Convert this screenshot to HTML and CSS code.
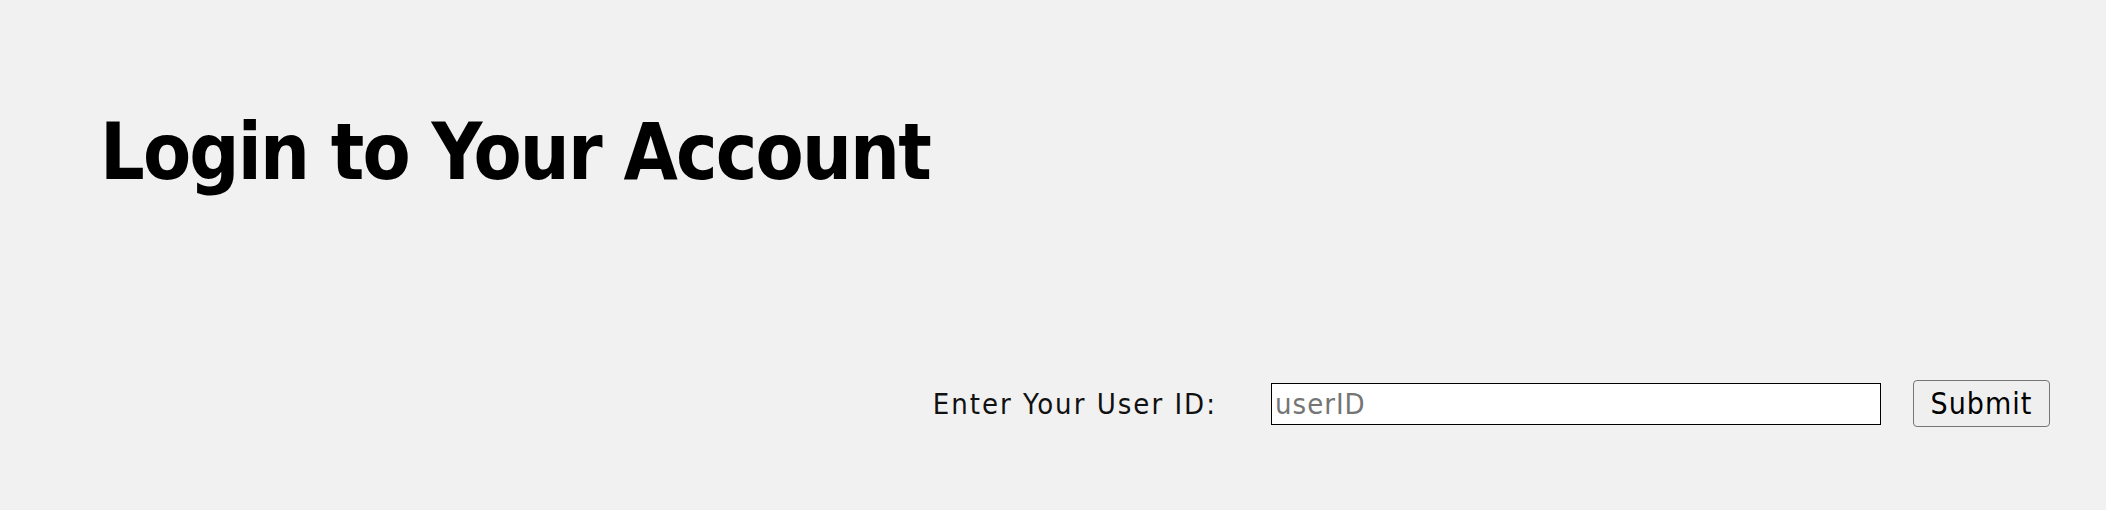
FILE: index.html
```html
<!DOCTYPE html>
<html>
<head>
<meta charset="utf-8">
<link rel="stylesheet" href="styles.css">
</head>
<body>
<div class="page">
  <h1 class="title">Login to Your Account</h1>
  <form class="login-form">
    <label class="label" for="uid">Enter Your User ID:</label>
    <input class="input" id="uid" type="text" placeholder="userID">
    <button class="submit" type="button">Submit</button>
  </form>
</div>
</body>
</html>
```
FILE: styles.css
```css
html, body {
  margin: 0;
  padding: 0;
  background: #f1f1f1;
}
.page {
  width: 2106px;
  height: 510px;
  box-sizing: border-box;
  padding: 106px 56px 0 100px;
  font-family: "DejaVu Sans Condensed", sans-serif;
}
.title {
  margin: 0;
  font-size: 78px;
  line-height: 92px;
  font-weight: 700;
  color: #000;
  letter-spacing: -1.8px;
}
.login-form {
  margin-top: 182px;
  display: flex;
  justify-content: flex-end;
  align-items: center;
}
.label {
  font-size: 29px;
  color: #111;
  letter-spacing: 2px;
  margin-right: 54px;
}
.input {
  width: 610px;
  height: 42px;
  box-sizing: border-box;
  border: 1px solid #000;
  background: #fff;
  padding: 0 3px;
  font-family: inherit;
  font-size: 29px;
  letter-spacing: 1px;
  margin: 0 32px 0 0;
}
.input::placeholder {
  color: #757575;
}
.submit {
  width: 137px;
  height: 47px;
  box-sizing: border-box;
  border: 1px solid #767676;
  border-radius: 4px;
  background: #efefef;
  font-family: inherit;
  font-size: 30px;
  letter-spacing: 1px;
  color: #000;
  padding: 0;
}
```
